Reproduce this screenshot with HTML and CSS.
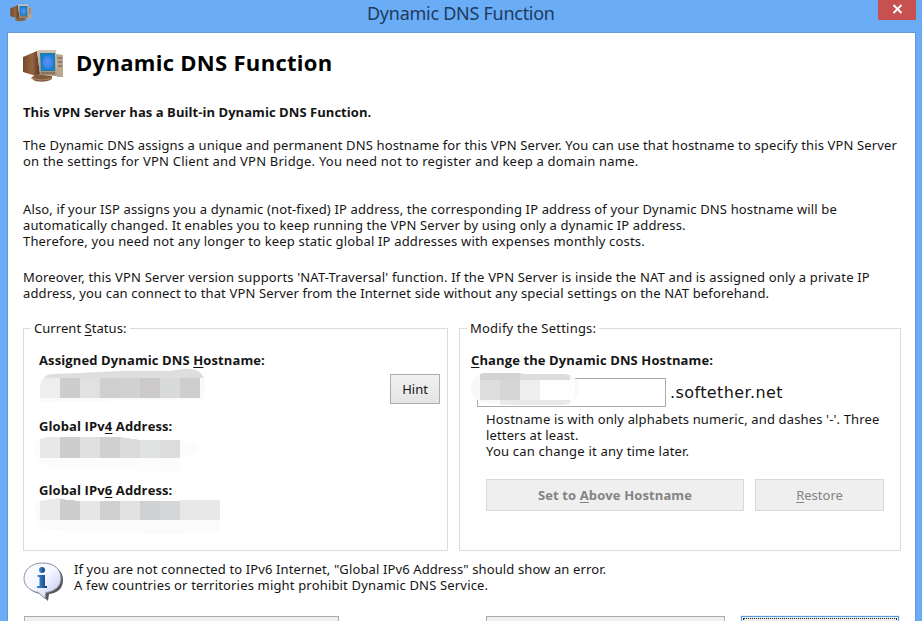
FILE: index.html
```html
<!DOCTYPE html>
<html lang="en">
<head>
<meta charset="utf-8">
<title>Dynamic DNS Function</title>
<link rel="stylesheet" href="styles.css">
</head>
<body>
<svg width="0" height="0" class="defs" aria-hidden="true">
  <defs>
    <linearGradient id="side"><stop offset="0" stop-color="#74492c"/><stop offset=".55" stop-color="#986440"/><stop offset="1" stop-color="#4d3326"/></linearGradient>
    <linearGradient id="face" x2="0" y2="1"><stop offset="0" stop-color="#d2c4b0"/><stop offset="1" stop-color="#a58a70"/></linearGradient>
    <radialGradient id="screen"><stop offset="0" stop-color="#5b8df8"/><stop offset=".6" stop-color="#4388ed"/><stop offset="1" stop-color="#1680cf"/></radialGradient>
    <linearGradient id="bubble" x2="1" y2="1"><stop offset="0" stop-color="#fff"/><stop offset=".5" stop-color="#f4f6ff"/><stop offset="1" stop-color="#b9c6ee"/></linearGradient>
    <linearGradient id="letter" x2="1"><stop offset="0" stop-color="#3f8ee0"/><stop offset="1" stop-color="#123d78"/></linearGradient>
    <symbol id="computer" viewBox="0 0 42 34">
      <path d="M0 8 14 2 17 25 13 27 0 23Z" fill="url(#side)"/>
      <path d="M13 25 29 27 29 30Q23 34 12 32L8 29Z" fill="#80583c"/>
      <path d="M9 29Q18 33 29 29" fill="none" stroke="#b28a68"/>
      <path d="M14 2 Q15 1 17 1L33 1 34 27 17 26Z" fill="url(#face)"/>
      <path d="M33 5 40 6 40 28 34 28Z" fill="#b9a68f"/>
      <path d="M34.500 9H39M35 13H39M35 17H39" stroke="#655649"/>
      <path d="M17 4 32 4 32 22 18 22Z" fill="#187cae"/>
      <path d="M18.500 5.500 31 5.500 31 21 19 21Z" fill="url(#screen)"/>
      <path d="M18 24 32 24" stroke="#695441"/>
    </symbol>
  </defs>
</svg>
<div class="window">
  <header class="titlebar">
    <svg class="title-icon"><use href="#computer"/></svg>
    <span class="title">Dynamic DNS Function</span>
    <button class="close" aria-label="Close"><svg width="11" height="10" viewBox="0 0 11 10"><path d="M1.500 1 9.500 9M9.500 1 1.500 9" stroke="#fff" stroke-width="1.800"/></svg></button>
  </header>
  <main class="client">
    <div class="heading"><svg class="heading-icon"><use href="#computer"/></svg><h1>Dynamic DNS Function</h1></div>
    <p class="lead">This VPN Server has a Built-in Dynamic DNS Function.</p>
    <p class="para p1"><span>The Dynamic DNS assigns a unique and permanent DNS hostname for this VPN Server. You can use that hostname to specify this VPN Server</span><span class="wide">on the settings for VPN Client and VPN Bridge. You need not to register and keep a domain name.</span></p>
    <p class="para p2"><span>Also, if your ISP assigns you a dynamic (not-fixed) IP address, the corresponding IP address of your Dynamic DNS hostname will be</span><span>automatically changed. It enables you to keep running the VPN Server by using only a dynamic IP address.</span><span class="loose">Therefore, you need not any longer to keep static global IP addresses with expenses monthly costs.</span></p>
    <p class="para p3"><span class="loose">Moreover, this VPN Server version supports 'NAT-Traversal' function. If the VPN Server is inside the NAT and is assigned only a private IP</span><span>address, you can connect to that VPN Server from the Internet side without any special settings on the NAT beforehand.</span></p>
    <div class="groups">
      <fieldset class="status">
        <legend>Current <u>S</u>tatus:</legend>
        <div class="status-row">
          <div class="entries">
            <b>Assigned Dynamic DNS <u>H</u>ostname:</b>
            <svg class="masked" width="190" height="50" viewBox="35 370 190 50" shape-rendering="crispEdges">
              <clipPath id="c1"><path d="M40 400Q37 376 54 376L80 375 120 373 170 373 182 371Q205 369 205 387L204 401 40 404Z"/></clipPath>
              <g clip-path="url(#c1)"><path fill="#fafafa" d="M35 370h170v34H35z"/><path fill="#dedede" d="M40 370h164v10H40z"/><path fill="#eee" d="M40 380h20v20H40z"/><path fill="#cdcdcd" d="M60 380h20v20H60z"/><path fill="#e1e1e2" d="M80 380h20v20H80z"/><path fill="#cfcfcf" d="M100 380h20v20h-20z"/><path fill="#d1d1cf" d="M120 380h20v20h-20z"/><path fill="#ccc9cb" d="M140 380h20v20h-20z"/><path fill="#d8dbda" d="M160 380h20v20h-20z"/><path fill="#cecece" d="M180 380h20v20h-20z"/></g>
            </svg>
            <b>Global IPv<u>4</u> Address:</b>
            <svg class="masked" width="190" height="48" viewBox="35 436 190 48" shape-rendering="crispEdges">
              <path fill="#fcfcfc" d="M35 454Q35 442 44 440L180 441 198 447 198 455 180 460 180 474 140 473 60 469Q35 471 35 454Z"/>
              <path fill="#e8e8e6" d="M40 441 48 439H60V460H40z"/><path fill="#cdcdcd" d="M60 439h20v21H60z"/><path fill="#e0e0e1" d="M80 439h20v21H80z"/><path fill="#d0d0d0" d="M100 439h20v21h-20z"/><path fill="#dcdada" d="M120 439 140 442V460H120z"/><path fill="#e0e3e2" d="M140 442h20v18h-20z"/><path fill="#dcdcdc" d="M160 442h20v18h-20z"/>
            </svg>
            <b>Global IPv<u>6</u> Address:</b>
            <svg class="masked" width="190" height="38" viewBox="35 498 190 38" shape-rendering="crispEdges">
              <path fill="#fbfbfb" d="M35 503Q42 498 80 501L220 502V532L165 534 100 532 47 530Q35 528 35 503Z"/>
              <path fill="#eaeaea" d="M40 501 50 499 60 498V520H40z"/><path fill="#cdcdcd" d="M60 499 80 501V520H60z"/><path fill="#e7e7e7" d="M80 501h20v19H80z"/><path fill="#d0d0d0" d="M100 501h20v19h-20z"/><path fill="#e2e2e2" d="M120 501h20v19h-20z"/><path fill="#d0d1d3" d="M140 501h20v19h-20z"/><path fill="#d5d6d8" d="M160 501h20v19h-20z"/><path fill="#e8e8e8" d="M180 500h40v20h-40z"/>
            </svg>
          </div>
          <button class="hint">Hint</button>
        </div>
      </fieldset>
      <fieldset class="modify">
        <legend>Modify the Settings:</legend>
        <b><u>C</u>hange the Dynamic DNS Hostname:</b>
        <div class="host-row">
          <div class="host-input">
            <svg class="host-mask" width="110" height="36" viewBox="470 371 110 36" shape-rendering="crispEdges">
              <clipPath id="c2"><path d="M471 389Q471 375 484 373L520 373 524 374 565 374Q579 376 579 389 578 401 565 405L510 405 486 403Q471 400 471 389Z"/></clipPath>
              <g clip-path="url(#c2)"><path fill="#f8f8f8" d="M470 371h110v36H470z"/><path fill="#d2d2d2" d="M480 371h40v9h-40z"/><path fill="#ddd" d="M520 371h50v9h-50z"/><path fill="#dedede" d="M480 380h20v20h-20z"/><path fill="#d6d6d6" d="M500 380h20v20h-20z"/><path fill="#eee" d="M520 380h20v20h-20z"/><path fill="#fefefe" d="M540 380h35v20h-35z"/><path fill="#e8eaea" d="M500 400h70v7h-70z"/></g>
            </svg>
          </div>
          <span class="suffix">.softether.net</span>
        </div>
        <p class="para note"><span>Hostname is with only alphabets numeric, and dashes '-'. Three</span><span>letters at least.</span><span class="wide">You can change it any time later.</span></p>
        <div class="actions"><button class="set" disabled>Set to <u>A</u>bove Hostname</button><button class="restore" disabled><u>R</u>estore</button></div>
      </fieldset>
    </div>
    <div class="info">
      <svg width="42" height="42" viewBox="0 0 42 42">
        <path d="M21 4C8 4 3 11 3 19 3 28 11 32 18 33L25 40 26 33C35 32 40 27 40 19 40 10 33 4 21 4Z" fill="#555"/>
        <path d="M19.500 2C8 2 1 9 1 17.500 1 26 9 30.500 15 31.500L22 37.500 23 31.500C32 30.500 38 25 38 17.500 38 8 31 2 19.500 2Z" fill="url(#bubble)" stroke="#8c909b"/>
        <circle cx="19" cy="9" r="3" fill="url(#letter)"/><path d="M14.500 14H22V25H24V27H14V25H16.500V16H14.500Z" fill="url(#letter)"/>
      </svg>
      <p class="para"><span class="tight">If you are not connected to IPv6 Internet, "Global IPv6 Address" should show an error.</span><span class="loose">A few countries or territories might prohibit Dynamic DNS Service.</span></p>
    </div>
    <footer class="footer"><button class="f1"></button><button class="f2"></button><button class="f3"><i></i></button></footer>
  </main>
</div>
</body>
</html>
```

FILE: styles.css
```css
* { box-sizing: border-box; }
body { margin: 0; overflow: hidden; background: #6aacf6; color: #151515; font: 13px/16px "Noto Sans", sans-serif; }
.defs { position: absolute; }
p, h1, fieldset { margin: 0; }
b { font-weight: 700; font-family: "Open Sans", sans-serif; letter-spacing: .11px; }
u { text-decoration-thickness: 1px; text-underline-offset: 2px; }
button { font: inherit; padding: 0; border: 1px solid #acacac; background: linear-gradient(#f1f1f1, #e4e4e4); border-radius: 0; color: #151515; }
.window { height: 621px; padding: 0 6px 0 7px; overflow: hidden; }
.titlebar { height: 32px; display: flex; align-items: flex-start; }
.title-icon { width: 23px; height: 18px; margin: 4px 0 0 3px; }
.title { flex: 1; padding: 3px 0 0 334px; font-size: 18px; line-height: 21px; color: #203a5c; white-space: nowrap; letter-spacing: -.27px; }
.close { width: 38px; height: 20px; border: 0; background: #c75050; display: flex; align-items: center; justify-content: center; padding-bottom: 3px; }
.client { height: 589px; background: #fff; border: 1px solid #6499d5; border-bottom: 0; padding: 0 14px 0 15px; }
.heading { height: 66px; display: flex; align-items: flex-start; }
.heading-icon { width: 42px; height: 34px; margin-top: 16px; }
h1 { font: 700 22px/30px "Open Sans", sans-serif; letter-spacing: .3px; margin: 14px 0 0 11px; color: #000; white-space: nowrap; }
.lead { font: 700 13px/16px "Open Sans", sans-serif; letter-spacing: .05px; margin-top: 5px; }
.para span { display: block; white-space: nowrap; letter-spacing: .142px; }
.para .wide { letter-spacing: .21px; }
.para .loose { letter-spacing: .17px; }
.para .tight { letter-spacing: .12px; }
.p1 { margin-top: 17px; }
.p2 { margin-top: 32px; }
.p3 { margin-top: 20px; }
.groups { display: grid; grid-template-columns: 425px 442px; gap: 11px; margin-top: 19px; }
fieldset { height: 231px; min-width: 0; border: 1px solid #dcdcdc; padding: 0 7px 0 15px; }
legend { margin-left: -8px; padding: 0 3px; line-height: 16px; letter-spacing: .05px; }
.status-row { display: flex; justify-content: space-between; padding-top: 16px; }
.entries { display: flex; flex-direction: column; }
.entries b { height: 16px; white-space: nowrap; }
.masked { display: block; margin-left: -4px; }
.hint { width: 50px; height: 30px; margin-top: 22px; }
.modify { padding: 0 16px 0 11px; }
.modify legend { margin-left: -4px; letter-spacing: .22px; }
.modify > b { display: block; margin-top: 16px; }
.host-row { display: flex; align-items: center; margin: 10px 0 0 6px; height: 29px; }
.host-input { position: relative; width: 189px; height: 29px; border: 1px solid #acacac; }
.host-mask { position: absolute; left: -8px; top: -8px; }
.suffix { font-family: "DejaVu Sans", sans-serif; font-size: 16px; margin-left: 4px; letter-spacing: .4px; }
.note { margin: 4px 0 0 15px; }
.actions { display: flex; justify-content: space-between; margin: 20px 0 0 15px; }
.actions button { height: 32px; background: #efefef; border-color: #d9d9d9; color: #838383; }
.actions .set { width: 258px; font: 700 13px "Open Sans", sans-serif; letter-spacing: .12px; }
.actions .restore { width: 129px; }
.info { display: flex; margin-top: 10px; height: 55px; }
.info svg { flex: none; }
.info .para { margin-left: 9px; }
.footer { display: flex; }
.footer button { height: 30px; background: #efefef; }
.f1 { width: 315px; margin-left: 1px; }
.f2 { width: 239px; margin-left: 147px; }
.footer .f3 { width: 158px; margin-left: 16px; border: 1px solid #569de5; padding: 1px; box-shadow: 0 0 1px #80bce9; }
.f3 i { display: block; height: 26px; border: 1px dotted #222; }
```
